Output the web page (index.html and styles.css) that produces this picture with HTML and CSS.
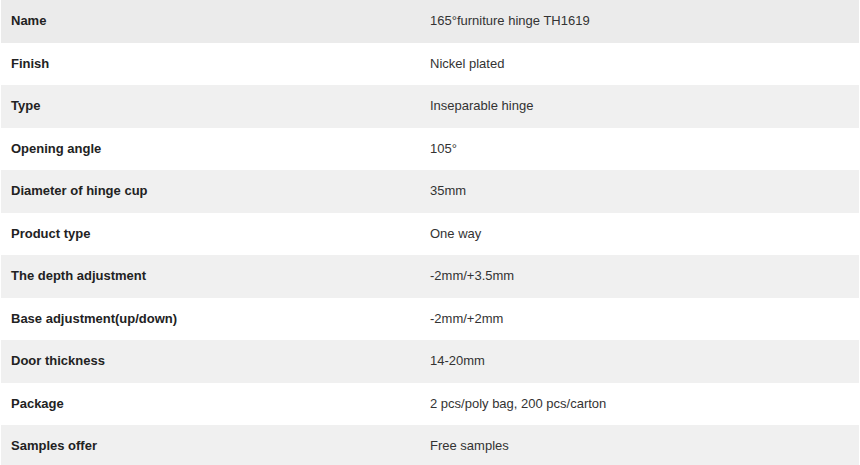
FILE: index.html
```html
<!DOCTYPE html>
<html>
<head>
<meta charset="utf-8">
<link rel="stylesheet" href="styles.css">
</head>
<body>
<div class="spec">
  <div class="row first"><div class="k">Name</div><div class="v">165°furniture hinge TH1619</div></div>
  <div class="row"><div class="k">Finish</div><div class="v">Nickel plated</div></div>
  <div class="row"><div class="k">Type</div><div class="v">Inseparable hinge</div></div>
  <div class="row"><div class="k">Opening angle</div><div class="v">105°</div></div>
  <div class="row"><div class="k">Diameter of hinge cup</div><div class="v">35mm</div></div>
  <div class="row"><div class="k">Product type</div><div class="v">One way</div></div>
  <div class="row"><div class="k">The depth adjustment</div><div class="v">-2mm/+3.5mm</div></div>
  <div class="row"><div class="k">Base adjustment(up/down)</div><div class="v">-2mm/+2mm</div></div>
  <div class="row"><div class="k">Door thickness</div><div class="v">14-20mm</div></div>
  <div class="row"><div class="k">Package</div><div class="v">2 pcs/poly bag, 200 pcs/carton</div></div>
  <div class="row"><div class="k">Samples offer</div><div class="v">Free samples</div></div>
</div>
</body>
</html>
```
FILE: styles.css
```css
html, body {
  margin: 0;
  padding: 0;
  background: #ffffff;
}
body {
  font-family: "Liberation Sans", Arial, sans-serif;
  font-size: 13px;
  color: #333333;
}
.spec {
  margin-left: 1px;
  width: 858px;
  display: flex;
  flex-direction: column;
}
.row {
  display: grid;
  grid-template-columns: 419px 1fr;
  height: 42.5px;
  align-items: center;
  background: #ffffff;
}
.row:nth-child(odd) {
  background: #f0f0f0;
}
.row.first {
  background: #ebebeb;
}
.k {
  padding-left: 10px;
  padding-bottom: 1px;
  font-weight: bold;
  color: #222222;
}
.v {
  padding-left: 10px;
  padding-bottom: 1px;
  color: #333333;
}
```
